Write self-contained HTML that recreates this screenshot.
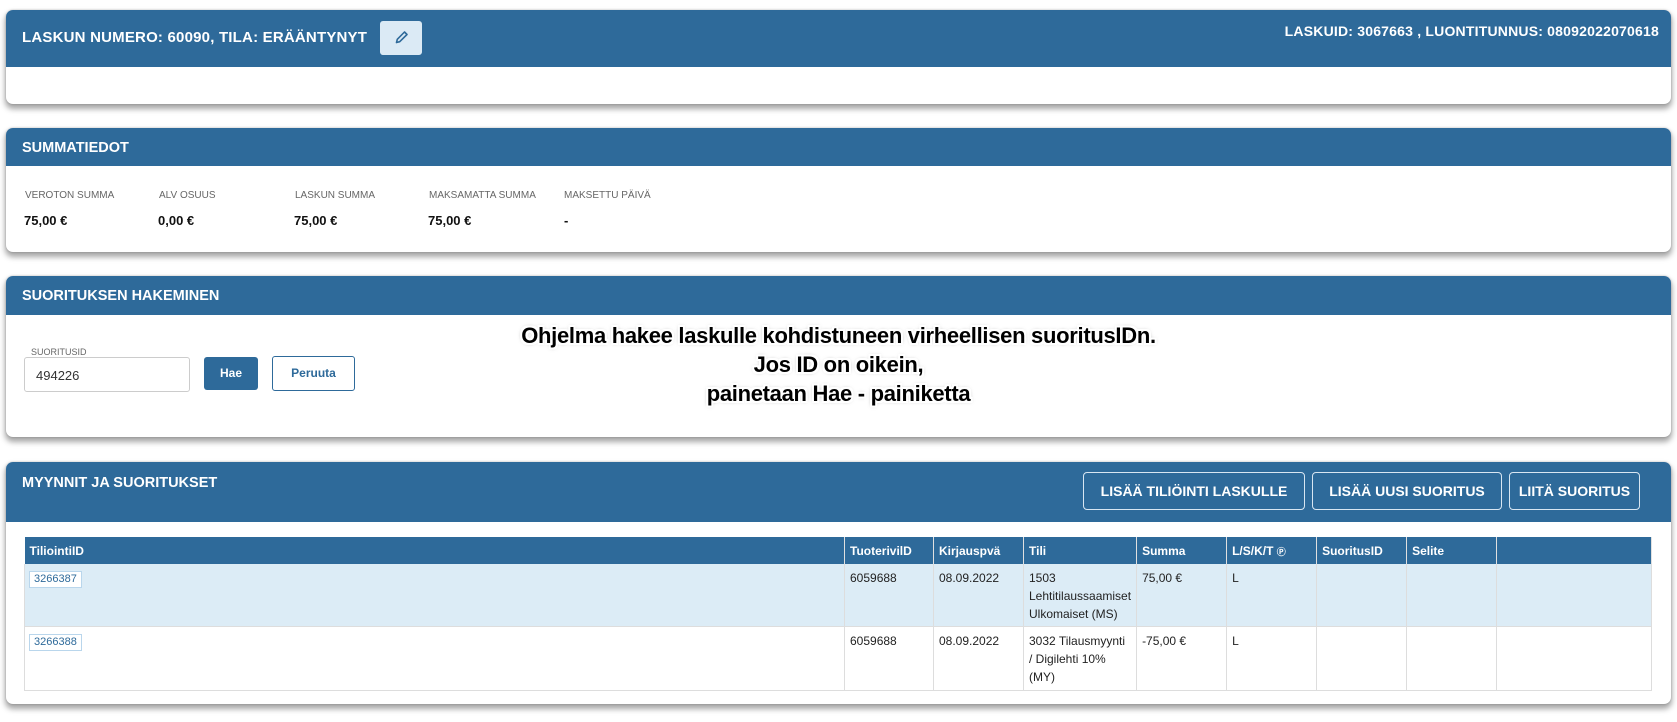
<!DOCTYPE html>
<html><head><meta charset="utf-8">
<style>
*{box-sizing:border-box;margin:0;padding:0}
body{width:1677px;height:722px;background:#fff;font-family:"Liberation Sans",Arial,sans-serif;position:relative;overflow:hidden}
.card{position:absolute;left:6px;width:1665px;background:#fff;border-radius:7px;box-shadow:0 4px 6px 1px rgba(0,0,0,.35),0 0 2px rgba(0,0,0,.2);overflow:hidden}
.hd{background:#2e6a9a;color:#fff;font-weight:bold;font-size:14.5px;position:relative}
.abs{position:absolute}
.lbl{position:absolute;font-size:10px;color:#666}
.val{position:absolute;font-size:13px;font-weight:bold;color:#111}
.btn{position:absolute;border:1px solid #d8e6f2;border-radius:4px;color:#fff;font-weight:bold;font-size:14px;text-align:center;line-height:36px}
table{position:absolute;left:18px;top:75px;width:1628px;border-collapse:collapse;font-size:12px;color:#222}
th{background:#2e6a9a;color:#fff;text-align:left;font-weight:bold;height:27px;padding:0 5px;border-right:1px solid #e0e0e0;font-size:12px}
td{vertical-align:top;padding:5px 5px 3px;line-height:18px;border-right:1px solid #ddd;border-bottom:1px solid #ddd}
tr.r1 td{background:#dcecf6;height:62px}
tr.r2 td{height:64px}
.id{display:inline-block;border:1px solid #b9d6ec;background:#fff;color:#2e6a9a;padding:0 4px;font-size:11px;line-height:15px}
.ann{position:absolute;left:0;width:1665px;text-align:center;font-weight:bold;font-size:22px;color:#000;line-height:29px;text-shadow:-2px 0 #fff,2px 0 #fff,0 -2px #fff,0 2px #fff,-2px -2px #fff,2px 2px #fff,-2px 2px #fff,2px -2px #fff,0 0 4px #777;letter-spacing:-0.3px}
</style></head><body>

<div class="card" style="top:10px;height:94px">
 <div class="hd" style="height:57px">
  <div class="abs" style="left:16px;top:19px;font-size:15px;letter-spacing:0.2px">LASKUN NUMERO: 60090, TILA: ERÄÄNTYNYT</div>
  <div class="abs" style="left:374px;top:11px;width:42px;height:34px;background:#dbeaf5;border-radius:3px">
   <svg width="42" height="34" viewBox="0 0 42 34"><path d="M16.5 21.5 L17.3 18.3 L24.5 11 L27 13.5 L19.7 20.7 Z" fill="none" stroke="#2e6a9a" stroke-width="1.6" stroke-linejoin="round"/></svg>
  </div>
  <div class="abs" style="right:12px;top:13px;font-size:14px;letter-spacing:0.2px">LASKUID: 3067663 , LUONTITUNNUS: 08092022070618</div>
 </div>
</div>

<div class="card" style="top:128px;height:124px">
 <div class="hd" style="height:38px"><div class="abs" style="left:16px;top:12px">SUMMATIEDOT</div></div>
 <div class="lbl" style="left:19px;top:62px">VEROTON SUMMA</div>
 <div class="lbl" style="left:153px;top:62px">ALV OSUUS</div>
 <div class="lbl" style="left:289px;top:62px">LASKUN SUMMA</div>
 <div class="lbl" style="left:423px;top:62px">MAKSAMATTA SUMMA</div>
 <div class="lbl" style="left:558px;top:62px">MAKSETTU PÄIVÄ</div>
 <div class="val" style="left:18px;top:85px">75,00 €</div>
 <div class="val" style="left:152px;top:85px">0,00 €</div>
 <div class="val" style="left:288px;top:85px">75,00 €</div>
 <div class="val" style="left:422px;top:85px">75,00 €</div>
 <div class="val" style="left:558px;top:85px">-</div>
</div>

<div class="card" style="top:276px;height:161px">
 <div class="hd" style="height:39px"><div class="abs" style="left:16px;top:12px">SUORITUKSEN HAKEMINEN</div></div>
 <div class="abs" style="left:18px;top:81px;width:166px;height:35px;border:1px solid #ccc;border-radius:3px;font-size:13px;color:#333;padding:10px 0 0 11px">494226</div>
 <div class="abs" style="left:22px;top:71px;background:#fff;padding:0 3px;font-size:9px;color:#666">SUORITUSID</div>
 <div class="abs" style="left:198px;top:81px;width:54px;height:33px;background:#2e6a9a;border-radius:3px;color:#fff;font-weight:bold;font-size:12px;text-align:center;line-height:33px">Hae</div>
 <div class="abs" style="left:266px;top:80px;width:83px;height:35px;border:1px solid #2e6a9a;border-radius:3px;color:#2e6a9a;font-weight:bold;font-size:12px;text-align:center;line-height:33px">Peruuta</div>
 <div class="ann" style="top:45px">Ohjelma hakee laskulle kohdistuneen virheellisen suoritusIDn.<br>Jos ID on oikein,<br>painetaan Hae - painiketta</div>
</div>

<div class="card" style="top:462px;height:242px">
 <div class="hd" style="height:60px">
  <div class="abs" style="left:16px;top:13px">MYYNNIT JA SUORITUKSET</div>
  <div class="btn" style="left:1077px;top:10px;width:222px;height:38px">LISÄÄ TILIÖINTI LASKULLE</div>
  <div class="btn" style="left:1306px;top:10px;width:190px;height:38px">LISÄÄ UUSI SUORITUS</div>
  <div class="btn" style="left:1503px;top:10px;width:131px;height:38px">LIITÄ SUORITUS</div>
 </div>
 <table>
  <tr><th style="width:820px">TiliointiID</th><th style="width:89px">TuoterivilD</th><th style="width:90px">Kirjauspvä</th><th style="width:109px">Tili</th><th style="width:90px">Summa</th><th style="width:90px">L/S/K/T <span style="font-size:9px">&#9413;</span></th><th style="width:90px">SuoritusID</th><th style="width:90px">Selite</th><th></th></tr>
  <tr class="r1"><td style="border-left:1px solid #ddd;padding:5px 4px 3px"><span class="id">3266387</span></td><td>6059688</td><td>08.09.2022</td><td>1503<br>Lehtitilaussaamiset<br>Ulkomaiset (MS)</td><td>75,00 €</td><td>L</td><td></td><td></td><td></td></tr>
  <tr class="r2"><td style="border-left:1px solid #ddd;padding:5px 4px 3px"><span class="id">3266388</span></td><td>6059688</td><td>08.09.2022</td><td>3032 Tilausmyynti<br>/ Digilehti 10%<br>(MY)</td><td>-75,00 €</td><td>L</td><td></td><td></td><td></td></tr>
 </table>
</div>
</body></html>
